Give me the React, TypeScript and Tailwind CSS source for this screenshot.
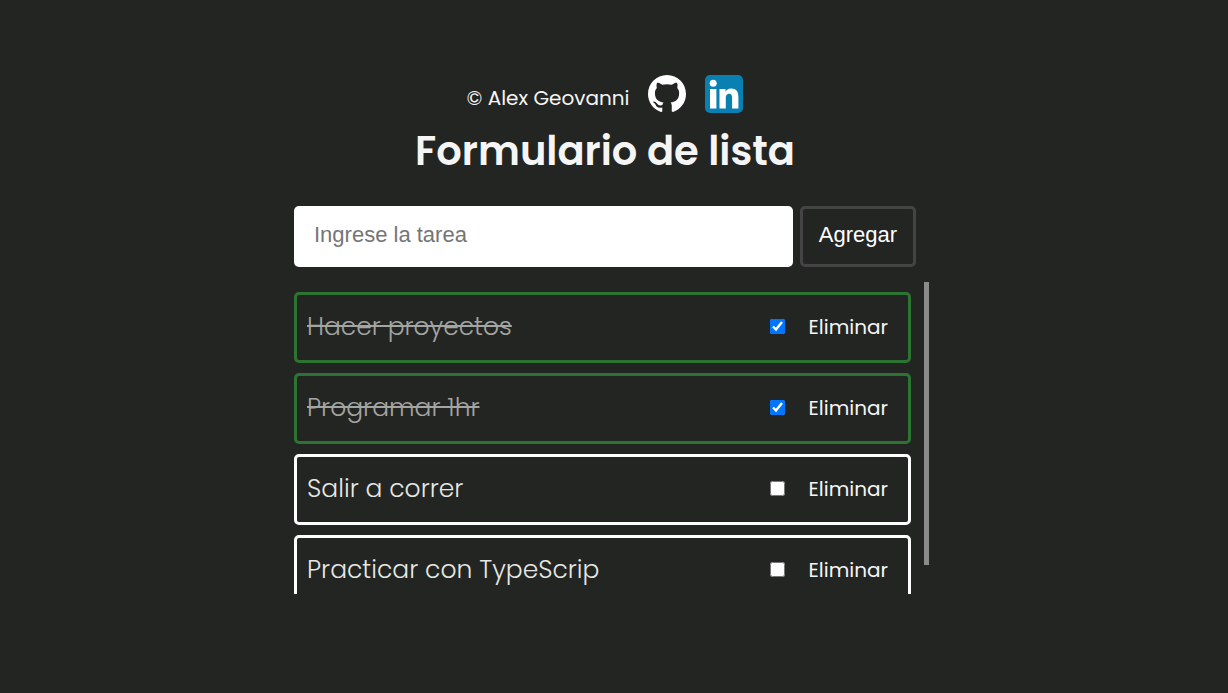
import { useState } from "react";
import type { FormEvent, UIEvent } from "react";

interface Task {
  id: number;
  name: string;
  done: boolean;
}

const initialTasks: Task[] = [
  { id: 1, name: "Hacer proyectos", done: true },
  { id: 2, name: "Programar 1hr", done: true },
  { id: 3, name: "Salir a correr", done: false },
  { id: 4, name: "Practicar con TypeScrip", done: false },
];

const LIST_HEIGHT = 312;
const ROW_PITCH = 81;
const LIST_PADDING = 20;

function GithubIcon() {
  return (
    <svg viewBox="0 0 16 16" className="size-[38px]" fill="#ffffff" aria-hidden="true">
      <path d="M8 0C3.58 0 0 3.58 0 8c0 3.54 2.29 6.53 5.47 7.59.4.07.55-.17.55-.38 0-.19-.01-.82-.01-1.49-2.01.37-2.53-.49-2.69-.94-.09-.23-.48-.94-.82-1.13-.28-.15-.68-.52-.01-.53.63-.01 1.08.58 1.23.82.72 1.21 1.87.87 2.33.66.07-.52.28-.87.51-1.07-1.78-.2-3.64-.89-3.64-3.95 0-.87.31-1.59.82-2.15-.08-.2-.36-1.02.08-2.12 0 0 .67-.21 2.2.82.64-.18 1.32-.27 2-.27s1.36.09 2 .27c1.53-1.04 2.2-.82 2.2-.82.44 1.1.16 1.92.08 2.12.51.56.82 1.27.82 2.15 0 3.07-1.87 3.75-3.65 3.95.29.25.54.73.54 1.48 0 1.07-.01 1.93-.01 2.2 0 .21.15.46.55.38A8.01 8.01 0 0 0 16 8c0-4.42-3.58-8-8-8z" />
    </svg>
  );
}

function LinkedinIcon() {
  return (
    <svg viewBox="0 0 38 38" className="size-[38px]" aria-hidden="true">
      <rect width="38" height="38" rx="5" fill="#0a7fb2" />
      <circle cx="8.2" cy="8.2" r="3.5" fill="#fff" />
      <path
        fill="#fff"
        d="M5 14h6.400v19.500H5zM14.500 14h6v2.600c.8-1.500 2.800-3.100 5.600-3.100 6 0 7.300 3.900 7.300 9v11h-6.300v-9.800c0-2.200 0-5-2.900-5s-3.400 2.400-3.400 4.900v9.900h-6.300z"
      />
    </svg>
  );
}

export default function App() {
  const [tasks, setTasks] = useState<Task[]>(initialTasks);
  const [draft, setDraft] = useState("");
  const [scrollTop, setScrollTop] = useState(0);

  const addTask = (event: FormEvent) => {
    event.preventDefault();
    if (!draft.trim()) return;
    setTasks([...tasks, { id: Date.now(), name: draft.trim(), done: false }]);
    setDraft("");
  };

  const toggleTask = (id: number) =>
    setTasks(tasks.map((task) => (task.id === id ? { ...task, done: !task.done } : task)));

  const removeTask = (id: number) => setTasks(tasks.filter((task) => task.id !== id));

  const contentHeight = tasks.length * ROW_PITCH + LIST_PADDING;
  const scrollRatio = Math.min(1, LIST_HEIGHT / contentHeight);

  return (
    <div className="min-h-screen bg-[#232523] pt-[75px] font-['Poppins','Inter',sans-serif] text-[#f5f5f5]">
      <main className="mx-auto max-w-[640px]">
        <div className="pr-[18px]">
          <header className="flex flex-col items-center">
            <div className="flex items-center gap-[19px]">
              <p className="pt-2 text-xl leading-[30px]">© Alex Geovanni</p>
              <a href="#github" aria-label="GitHub">
                <GithubIcon />
              </a>
              <a href="#linkedin" aria-label="LinkedIn">
                <LinkedinIcon />
              </a>
            </div>
            <h1 className="mt-2 text-[40px] leading-[60px] font-semibold">Formulario de lista</h1>
          </header>

          <form
            onSubmit={addTask}
            className="mt-[25px] flex gap-[7px] font-['Liberation_Sans',Arial,sans-serif] text-[22px]"
          >
            <input
              type="text"
              aria-label="Tarea"
              placeholder="Ingrese la tarea"
              value={draft}
              onChange={(event) => setDraft(event.target.value)}
              className="h-[61px] min-w-0 flex-1 rounded-[5px] bg-white px-5 pb-1 text-black placeholder:text-[#757575]"
            />
            <button
              type="submit"
              className="h-[61px] w-[116px] rounded-[5px] border-3 border-[#434443] pb-1 text-white"
            >
              Agregar
            </button>
          </form>
        </div>

        <div className="mt-[15px] mr-[5px] flex gap-[13px]">
          <ul
            onScroll={(event: UIEvent<HTMLUListElement>) => setScrollTop(event.currentTarget.scrollTop)}
            className="flex h-[312px] min-w-0 flex-1 flex-col gap-[10px] overflow-y-auto pt-[10px] pb-5 [scrollbar-width:none]"
          >
            {tasks.map((task) => (
              <li
                key={task.id}
                className={`flex h-[71px] shrink-0 items-center rounded-[5px] border-3 pr-5 pb-0.5 pl-[10px] ${
                  task.done ? "border-[#2d7432]" : "border-white"
                }`}
              >
                <label
                  htmlFor={`task-${task.id}`}
                  className={`flex-1 text-[25px] leading-10 font-light ${
                    task.done ? "text-[#a3a5a2] line-through decoration-2" : "text-[#e6e8e4]"
                  }`}
                >
                  {task.name}
                </label>
                <input
                  id={`task-${task.id}`}
                  type="checkbox"
                  checked={task.done}
                  onChange={() => toggleTask(task.id)}
                  className="size-[15px]"
                />
                <button type="button" onClick={() => removeTask(task.id)} className="ml-6 text-xl">
                  Eliminar
                </button>
              </li>
            ))}
          </ul>
          <div className="w-[5px]" aria-hidden="true">
            <div
              className="bg-[#8b8b8b]"
              style={{
                height: Math.round(LIST_HEIGHT * scrollRatio),
                marginTop: Math.round(scrollTop * scrollRatio),
              }}
            />
          </div>
        </div>
      </main>
    </div>
  );
}
